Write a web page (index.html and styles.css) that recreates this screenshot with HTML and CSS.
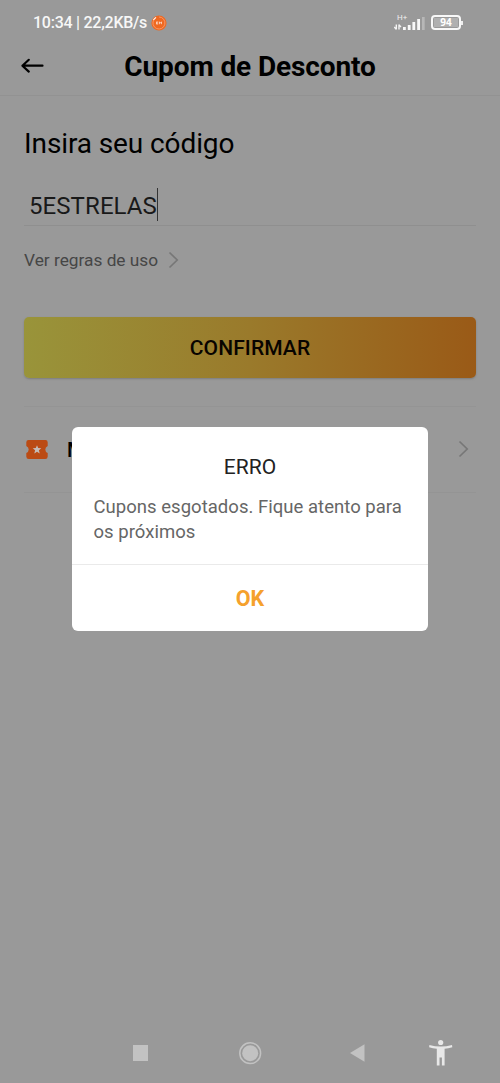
FILE: index.html
```html
<!DOCTYPE html>
<html lang="pt-BR">
<head>
<meta charset="utf-8">
<meta name="viewport" content="width=device-width">
<title>Cupom de Desconto</title>
<link rel="stylesheet" href="styles.css">
</head>
<body>
<div class="screen">
  <div class="status">
    <span class="clock">10:34 | 22,2KB/s</span>
    <svg class="app-dot" width="16" height="16" viewBox="0 0 16 16"><circle cx="8" cy="8" r="7.600" fill="#ef6820"/><path d="M3 4.600A6 6 0 1 0 8 2" fill="none" stroke="#f6a57a" stroke-width=".8"/><path d="M2.400 4.800 5 2.300" stroke="#fff" stroke-width="1.100"/><path d="M5.500 6.800v2.400M5.500 7h1.700M5.500 8h1.700M5.500 9h1.700M8.500 9.200V6.800l1 1.400 1-1.400v2.400" fill="none" stroke="#ffe8dc" stroke-width=".7"/></svg>
    <span class="network">
      <span class="net-type">H+</span>
      <svg width="31" height="16" viewBox="0 0 31 16"><path d="M2.300 9.500v5M.2 12l2 2.400M5 14.500v-5M5 9.700l2 2.400" stroke="#f4f4f4" stroke-width="1.400" fill="none"/><path d="M9 12h2.800v3H9zM13.800 10h2.800v5h-2.800zM18.400 7h2.800v8h-2.800zM23.200 4h2.800v11h-2.800z" fill="#f8f8f8"/><path d="M28 2h2.700v13H28z" fill="#b7b7b7"/></svg>
    </span>
    <span class="battery"><span class="level">94</span></span>
  </div>
  <header class="appbar">
    <svg class="back" width="24" height="18" viewBox="0 0 24 18"><path d="M22.500 8.700H2.500M8.800 2.800 2.400 8.700l6.400 5.900" fill="none" stroke="#000" stroke-width="2.200" stroke-linecap="round" stroke-linejoin="round"/></svg>
    <h1>Cupom de Desconto</h1>
  </header>
  <main>
    <h2>Insira seu código</h2>
    <div class="field"><span>5ESTRELAS</span><i class="caret"></i></div>
    <div class="rules"><span>Ver regras de uso</span><svg width="11" height="18" viewBox="0 0 11 18"><path d="m1.500 1.500 7.700 7.500-7.700 7.500" fill="none" stroke="#777" stroke-width="1.700"/></svg></div>
    <button class="confirm">CONFIRMAR</button>
    <div class="row">
      <svg width="22" height="19" viewBox="0 0 22 19"><path d="M2.500 0h17Q21.600 0 21.700 2.200V6q-2.400 1-2.400 3.500t2.400 3.500v3.500Q21.600 19 19.300 19H2.700Q.4 19 .3 16.500V13q2.400-1 2.400-3.500T.3 6V2.200Q.4 0 2.500 0z" fill="#bb4b14"/><path d="m11 5.200 1.200 2.900 3.100.2-2.400 2 .8 3.100-2.700-1.700-2.700 1.700.8-3.100-2.400-2 3.100-.2z" fill="#c5bcb7"/></svg>
      <span class="row-label">Meus cupons</span>
      <svg class="chev" width="11" height="18" viewBox="0 0 11 18"><path d="m1.500 1.500 7.700 7.500-7.700 7.500" fill="none" stroke="#777" stroke-width="1.700"/></svg>
    </div>
  </main>
  <nav>
    <svg width="500" height="40" viewBox="0 0 500 40"><path d="M133 12h15v16h-15z" fill="#c2c2c2"/><circle cx="250.200" cy="20.200" r="10.400" fill="none" stroke="#c2c2c2" stroke-width="1.500"/><circle cx="250.200" cy="20.200" r="8" fill="#c2c2c2"/><path d="M350 20 364.500 11.300v17.400z" fill="#c2c2c2"/><g fill="#e8e8e8"><circle cx="440.700" cy="9.500" r="2.600"/><path d="M429.400 12q5.600 1.500 11.300 1.500T452 12l.3 2.200q-4 1.200-7.700 1.500V32.500h-2.700V24.500h-2.400V32.500h-2.700V15.700q-4-.3-7.700-1.500z"/></g></svg>
  </nav>
  <section class="dialog" role="alertdialog">
    <h3>ERRO</h3>
    <p>Cupons esgotados. Fique atento para os próximos</p>
    <div class="ok">OK</div>
  </section>
</div>
</body>
</html>
```
FILE: styles.css
```css
* { box-sizing: border-box; }
body { margin: 0; font-family: Roboto, "Liberation Sans", sans-serif; background: #999; }
.screen { position: relative; width: 500px; height: 1083px; background: #999; color: #000; display: flex; flex-direction: column; overflow: hidden; }
svg { display: block; flex: none; }
h1, h2, h3, p { margin: 0; }
.status { height: 45px; display: flex; align-items: center; padding: 0 39px 0 33px; }
.clock { color: #f7f7f7; font-size: 16px; font-weight: 500; line-height: 20px; letter-spacing: -0.25px; white-space: nowrap; }
.app-dot { margin-left: 4px; }
.network { margin-left: auto; margin-right: 6px; display: grid; }
.network > * { grid-area: 1 / 1; }
.net-type { color: #eee; font-size: 8px; line-height: 8px; padding-left: 3px; margin-top: -1px; }
.battery { position: relative; width: 30px; height: 15px; border: 2px solid #f8f8f8; border-radius: 4px; padding: 1px; }
.battery::after { content: ""; position: absolute; right: -4px; top: 4px; width: 2px; height: 4px; background: #eee; }
.level { display: block; height: 9px; background: #b0b0b0; color: #fff; font: 700 10px/9px "Noto Sans", sans-serif; text-align: center; }
.appbar { height: 51px; border-bottom: 1px solid #929292; display: grid; grid-template-columns: 24px 1fr 24px; align-items: center; padding: 0 20px 8px; }
h1 { font-size: 28px; line-height: 34px; font-weight: 700; letter-spacing: -0.12px; padding-top: 2px; text-align: center; white-space: nowrap; }
main { flex: 1; padding: 31px 24px 0; }
h2 { font-size: 28px; line-height: 34px; font-weight: 400; letter-spacing: -0.1px; }
.field { height: 45px; margin-top: 20px; padding: 7px 5px 0; display: flex; border-bottom: 1px solid #8f8f8f; font-size: 24px; line-height: 36px; letter-spacing: 0.08px; color: #191919; }
.caret { width: 1px; height: 33px; background: #333; }
.rules { height: 24px; margin-top: 22px; display: flex; align-items: center; gap: 10px; font-size: 17.300px; color: #464646; }
.rules span { margin-top: -1px; }
.confirm { display: block; width: 452px; height: 61px; margin-top: 45px; padding: 1px 0 0; border: 0; border-radius: 5px; background: linear-gradient(90deg, #99943a 0%, #9a7a2b 50%, #9a5a17 100%); box-shadow: 0 1px 2px #7d7d7d; color: #080400; font: 500 21px/60px Roboto, sans-serif; letter-spacing: 0.1px; }
.row { margin-top: 28px; height: 87px; border: solid #949494; border-width: 1px 0; display: flex; align-items: center; padding: 0 7px 0 2px; }
.row-label { margin-left: 19px; margin-top: 1px; font-size: 20px; font-weight: 500; }
.row > svg { margin-top: -1px; }
.row > .chev { margin-left: auto; }
nav { height: 50px; }
.dialog { position: absolute; left: 72px; top: 427px; width: 356px; height: 204px; border-radius: 6px; background: #fff; display: flex; flex-direction: column; padding-top: 27px; }
h3 { font-size: 21px; line-height: 27px; font-weight: 400; color: #222; text-align: center; }
.dialog p { flex: none; padding: 14px 20px 0 21.500px; height: 83px; font-size: 18.500px; letter-spacing: 0.03px; line-height: 24.500px; color: #666; }
.ok { flex: 1; border-top: 1px solid #eaeaea; text-align: center; color: #f5a12d; font-size: 21.500px; font-weight: 700; line-height: 67px; }
```
